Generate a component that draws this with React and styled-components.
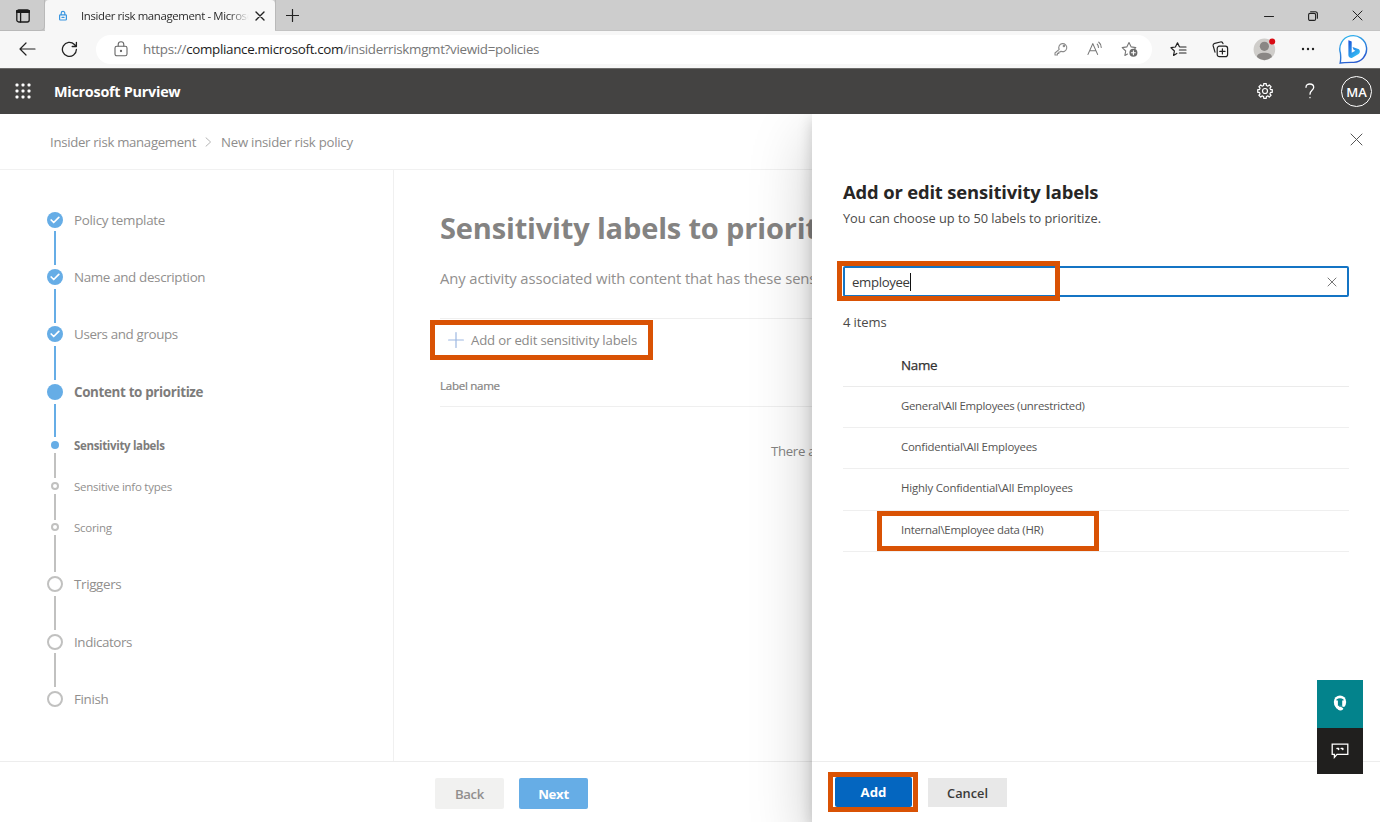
import React from "react";
import styled, { createGlobalStyle, css } from "styled-components";

const Global = createGlobalStyle`
  * { box-sizing: border-box; }
  html, body { margin: 0; padding: 0; overflow: hidden; background: #fff; }
  body { font-family: "Open Sans", "Noto Sans", sans-serif; font-size: 13px; color: #323130; }
  svg { display: block; flex: none; }
  h1, h2, p { margin: 0; }
  button { font: inherit; border: 0; padding: 0; background: none; }
`;

const Window = styled.div`
  width: 1380px; height: 822px; display: flex; flex-direction: column; overflow: hidden;
`;

/* ---- browser chrome ---- */
const TabStrip = styled.div`
  height: 31px; flex: none; display: flex; background: #cdcdcd; border-bottom: 1px solid #c3c3c3;
`;
const TabActions = styled.div`
  width: 45px; height: 31px; padding: 9px 0 0 16px; border-right: 1px solid #b9b9b9;
  border-bottom: 1px solid #b9b9b9; border-bottom-right-radius: 5px;
`;
const Tab = styled.div`
  width: 230px; height: 31px; flex: none; display: flex; align-items: center; justify-content: space-between;
  background: #f7f7f7; border-radius: 4px 4px 0 0; padding: 0 10px 0 13px;
`;
const TabLabel = styled.div`
  display: flex; align-items: center; gap: 13px;
`;
const TabTitle = styled.span`
  width: 168px; overflow: hidden; white-space: nowrap; font-size: 11.4px;
  letter-spacing: ${(p) => p.$ls}px; color: #2b2b2b; flex: none;
  mask-image: linear-gradient(90deg, #000 148px, transparent 168px);
`;
const NewTab = styled.div`
  flex: 1; padding: 9px 0 0 10px; border-left: 1px solid #b9b9b9;
`;
const WindowControls = styled.div`
  display: flex; align-items: center; gap: 34px; padding: 1px 17px 0 0;
`;
const Toolbar = styled.div`
  height: 37px; flex: none; display: flex; align-items: center; background: #f7f7f7; padding: 0 0 1px 19px;
`;
const Reload = styled.span`
  margin: 0 18px 0 25px;
`;
const AddressBar = styled.div`
  width: 1056px; height: 29px; flex: none; display: flex; align-items: center;
  background: #fff; border-radius: 15px; padding: 0 13px 0 18px;
`;
const Url = styled.span`
  margin-left: 15px; flex: 1; font-size: 13.4px; letter-spacing: ${(p) => p.$ls}px; color: #767676; white-space: nowrap;
  b { font-weight: 400; color: #1c1c1c; }
`;
const AddressIcons = styled.div`
  display: flex; align-items: center; gap: 18px;
`;
const BrowserIcons = styled.div`
  flex: 1; display: flex; align-items: center; justify-content: space-between; padding: 0 12px 0 18px;
`;

/* ---- suite header ---- */
const SuiteHeader = styled.header`
  height: 46px; flex: none; display: flex; align-items: center; background: #444342; color: #fff;
  padding: 0 8px 1px 15px; border-top: 1px solid #6c6b6a;
`;
const Product = styled.span`
  margin-left: 23px; flex: 1; font-size: 14.4px; font-weight: 700; letter-spacing: ${(p) => p.$ls}px;
`;
const HelpMark = styled.span`
  margin: 0 26px 0 32px;
`;
const Persona = styled.span`
  width: 31px; height: 31px; border: 1px solid #fff; border-radius: 50%; font-size: 13px; font-weight: 600;
  display: flex; align-items: center; justify-content: center; padding-top: 1px;
`;

/* ---- dimmed wizard page ---- */
const Stage = styled.main`
  position: relative; flex: 1; min-height: 0; display: flex; flex-direction: column; overflow: hidden;
`;
const Breadcrumb = styled.nav`
  height: 56px; flex: none; display: flex; align-items: center; gap: 9px; padding-left: 50px; color: #8e8d8c;
  border-bottom: 1px solid #f1f1f1; font-size: 13.2px; white-space: nowrap;
`;
const Crumb = styled.span`
  letter-spacing: ${(p) => p.$ls}px;
`;
const Body = styled.div`
  flex: 1; min-height: 0; display: flex;
`;
const Sidebar = styled.aside`
  width: 394px; flex: none; padding: 41.7px 0 0 47px; border-right: 1px solid #f0f0f0;
`;
const Step = styled.div`
  display: flex; height: ${(p) => p.$h}px; gap: 11px;
`;
const Track = styled.div`
  width: 16px; display: flex; flex-direction: column; align-items: center;
`;
const Dot = styled.span`
  width: ${(p) => p.$size}px; height: ${(p) => p.$size}px; border-radius: 50%; flex: none;
  display: flex; align-items: center; justify-content: center;
  ${(p) => p.$filled
    ? css`background: #66ade6;`
    : css`border: 2px solid #c1c1c0; background: #fff;`}
`;
const Line = styled.span`
  width: 2px; flex: 1; margin: 3.7px 0; background: ${(p) => (p.$done ? "#66ade6" : "#c1c1c0")};
`;
const StepLabel = styled.span`
  height: ${(p) => p.$size}px; line-height: ${(p) => (p.$size < 12 ? 9 : 16)}px; white-space: nowrap;
  font-size: ${(p) => (p.$size < 12 ? 11.5 : 13.4)}px; letter-spacing: ${(p) => p.$ls || 0}px;
  font-weight: ${(p) => (p.$active ? 700 : 400)}; color: ${(p) => (p.$active ? "#7d7c7b" : "#918f8e")};
`;
const Content = styled.section`
  flex: 1; padding: 38px 0 0 46px; white-space: nowrap; overflow: hidden;
`;
const Title = styled.h1`
  font-size: 29px; line-height: 40px; font-weight: 700; letter-spacing: ${(p) => p.$ls}px; color: #848382;
`;
const Lead = styled.p`
  margin-top: 20px; font-size: 14.8px; line-height: 20px; letter-spacing: ${(p) => p.$ls}px; color: #918f8e;
`;
const Commands = styled.div`
  margin-top: 30px; height: 43px; border-top: 1px solid #efefef; padding: 1px 0 0;
`;
const CommandButton = styled.button`
  position: relative; left: -10px; width: 223px; height: 40px; display: flex; align-items: center; gap: 7px;
  padding-left: 13px; border: 5px solid #d95204; color: #8b8a89; font-size: 13.2px; letter-spacing: ${(p) => p.$ls}px;
`;
const ColumnHead = styled.div`
  height: 46px; line-height: 50px; border-bottom: 1px solid #efefef; font-size: 11.6px; color: #858483;
  letter-spacing: ${(p) => p.$ls}px; -webkit-text-stroke: 0.2px #858483;
`;
const EmptyNote = styled.p`
  padding: 34px 0 0 331px; font-size: 13.2px; line-height: 20px; letter-spacing: -0.3px; color: #858483;
`;
const WizardFooter = styled.footer`
  height: 61px; flex: none; display: flex; align-items: flex-start; gap: 15px; padding: 16px 0 0 435px;
  border-top: 1px solid #ededed;
`;
const WizardButton = styled.button`
  width: 69px; height: 31px; border-radius: 2px; font-size: 13.2px; font-weight: ${(p) => (p.$primary ? 700 : 600)};
  letter-spacing: -0.3px;
  background: ${(p) => (p.$primary ? "#66ade6" : "#f1f1f0")}; color: ${(p) => (p.$primary ? "#fff" : "#918f8e")};
`;

/* ---- flyout panel ---- */
const Panel = styled.section`
  position: absolute; top: 0; right: 0; bottom: 0; width: 568px; display: flex; flex-direction: column;
  background: #fff; box-shadow: 0 25px 58px rgba(0, 0, 0, 0.22), 0 5px 14px rgba(0, 0, 0, 0.18);
`;
const PanelTop = styled.div`
  height: 59px; flex: none; display: flex; justify-content: flex-end; padding: 19px 17px 0 0;
`;
const PanelBody = styled.div`
  flex: 1; padding: 4px 31px 0; white-space: nowrap;
`;
const PanelTitle = styled.h2`
  font-size: 18.4px; line-height: 30px; font-weight: 700; letter-spacing: ${(p) => p.$ls}px; color: #272625;
`;
const Hint = styled.p`
  margin-top: 2px; font-size: 12.8px; line-height: 18px; letter-spacing: ${(p) => p.$ls}px; color: #4b4a49;
`;
const SearchBox = styled.div`
  position: relative; margin-top: 39px; height: 31px; width: 506px; display: flex; align-items: center;
  justify-content: space-between; border: 2px solid #1474c4; border-radius: 2px; padding: 0 10px 0 7px;
`;
const Query = styled.span`
  font-size: 13.2px; line-height: 18px; letter-spacing: ${(p) => p.$ls}px; border-right: 1px solid #111; color: #3b3a39;
`;
const Highlight = styled.span`
  position: absolute; left: ${(p) => p.$x}px; top: ${(p) => p.$y}px; width: ${(p) => p.$w}px; height: ${(p) => p.$h}px;
  border: 5px solid #d95204;
`;
const Count = styled.p`
  margin-top: 16px; font-size: 13px; line-height: 18px; letter-spacing: ${(p) => p.$ls}px; color: #4b4a49;
`;
const ListHead = styled.div`
  margin-top: 14px; height: 42px; line-height: 41px; padding-left: 58px; border-bottom: 1px solid #ebebeb;
  font-size: 13.4px; letter-spacing: -0.3px; color: #323130; -webkit-text-stroke: 0.25px #323130; width: 506px;
`;
const ListRow = styled.div`
  position: relative; width: 506px; height: 41.2px; line-height: 38px; padding-left: 58px; border-bottom: 1px solid #efefef;
  font-size: 11.4px; letter-spacing: ${(p) => p.$ls}px; color: #555453;
`;
const PanelFooter = styled.footer`
  height: 61px; flex: none; display: flex; gap: 10px; padding: 10px 0 0 16px; border-top: 1px solid #ededed;
`;
const AddFrame = styled.div`
  width: 90px; height: 40px; border: 5px solid #d95204; padding: 0 1px 0 2px; background: #fff;
`;
const AddButton = styled.button`
  width: 100%; height: 30px; border-radius: 2px; background: #0466c0; color: #fff; font-size: 13.2px; font-weight: 700;
`;
const CancelButton = styled.button`
  width: 79px; height: 29px; margin-top: 6px; background: #e8e8e8; color: #3b3a39; font-size: 12.8px; font-weight: 600;
`;
const Dock = styled.div`
  position: absolute; right: 17px; top: 566px; width: 46px;
`;
const DockButton = styled.div`
  height: ${(p) => p.$h}px; background: ${(p) => p.$bg}; display: flex; align-items: center; justify-content: center;
  padding-bottom: ${(p) => p.$lift || 0}px;
`;

const Icon = ({ w = 16, h = w, box = `0 0 ${w} ${h}`, color = "#333", sw = 1.1, children }) => (
  <svg width={w} height={h} viewBox={box} fill="none" stroke={color} strokeWidth={sw} strokeLinecap="round" strokeLinejoin="round">
    {children}
  </svg>
);

const Cross = ({ size, color, sw = 1 }) => (
  <Icon w={size} color={color} sw={sw}>
    <path d={`M1 1L${size - 1} ${size - 1}M${size - 1} 1L1 ${size - 1}`} />
  </Icon>
);

/* Outline of an eight-toothed gear centred at (8, 8). */
const gearPath = (() => {
  const at = (deg, r) => {
    const a = (deg * Math.PI) / 180;
    return `${(8 + r * Math.cos(a)).toFixed(2)} ${(8 + r * Math.sin(a)).toFixed(2)}`;
  };
  const points = [];
  for (let i = 0; i < 8; i++) {
    const c = i * 45;
    points.push(at(c - 14, 5.7), at(c - 10, 7.4), at(c + 10, 7.4), at(c + 14, 5.7));
  }
  return `M${points.join("L")}z`;
})();

const steps = [
  { label: "Policy template", h: 57.4, kind: "done", ls: -0.3 },
  { label: "Name and description", h: 57.4, kind: "done", ls: -0.35 },
  { label: "Users and groups", h: 57.4, kind: "done", ls: -0.38 },
  { label: "Content to prioritize", h: 57.2, kind: "current", ls: -0.35 },
  { label: "Sensitivity labels", h: 41.1, kind: "current", small: true, greyLine: true, ls: -0.34 },
  { label: "Sensitive info types", h: 41.1, small: true, ls: -0.25 },
  { label: "Scoring", h: 52.9, small: true, ls: -0.28 },
  { label: "Triggers", h: 57.4, ls: -0.35 },
  { label: "Indicators", h: 57.4, ls: -0.4 },
  { label: "Finish", h: 16, last: true, ls: -0.35 },
];

const rows = [
  { name: "General\\All Employees (unrestricted)", ls: -0.29 },
  { name: "Confidential\\All Employees", ls: -0.22 },
  { name: "Highly Confidential\\All Employees", ls: -0.18 },
  { name: "Internal\\Employee data (HR)", ls: -0.26, marked: true },
];

function BrowserChrome() {
  return (
    <>
      <TabStrip>
        <TabActions>
          <Icon w={14} h={14} color="#1b1b1b" sw={1.3}>
            <rect x="0.8" y="1" width="12.4" height="12" rx="2" />
            <path d="M1 2.6h12" strokeWidth="3" />
            <path d="M4.6 4v9" />
          </Icon>
        </TabActions>
        <Tab>
          <TabLabel>
            <Icon w={10} h={12} color="#3a96e0" sw={1.2}>
              <rect x="1.6" y="4.8" width="6.8" height="5.2" rx="0.8" />
              <path d="M3.2 4.6V3.2a1.8 1.8 0 0 1 3.6 0v1.4M4 7.4h2" />
            </Icon>
            <TabTitle $ls={-0.36}>Insider risk management - Microsoft</TabTitle>
          </TabLabel>
          <Cross size={10} color="#222" sw={1.4} />
        </Tab>
        <NewTab>
          <Icon w={13} h={13} color="#222" sw={1.2}><path d="M6.5 0.5v12M0.5 6.5h12" /></Icon>
        </NewTab>
        <WindowControls>
          <Icon w={10} h={10} color="#222"><path d="M0.5 5.5h9" /></Icon>
          <Icon w={10} h={10} color="#222">
            <rect x="0.6" y="2.4" width="7" height="7" rx="1.4" />
            <path d="M2.6 0.7h4.6a2.2 2.2 0 0 1 2.2 2.2v4.4" />
          </Icon>
          <Cross size={11} color="#222" />
        </WindowControls>
      </TabStrip>
      <Toolbar>
        <Icon w={17} h={14} color="#222" sw={1.2}><path d="M16 7H1M7 1L1 7l6 6" /></Icon>
        <Reload>
          <Icon w={17} h={17} color="#222" sw={1.3}>
            <path d="M15.4 8.5a7 7 0 1 1-2-5l1.9 1.9M15.4 1.3v4.2h-4.2" />
          </Icon>
        </Reload>
        <AddressBar>
          <Icon w={14} h={16} color="#666" sw={1.1}>
            <rect x="1" y="5.2" width="12" height="9.6" rx="1.8" />
            <path d="M4.2 5V3.6a2.8 2.8 0 0 1 5.6 0V5" />
            <circle cx="7" cy="10" r="0.6" fill="#666" />
          </Icon>
          <Url $ls={-0.32}>https://<b>compliance.microsoft.com</b>/insiderriskmgmt?viewid=policies</Url>
          <AddressIcons>
            <Icon w={14} h={14} color="#8a8a8a">
              <path d="M5.2 7.4A4 4 0 1 1 7 9.2L6 10H4.8v1.4H3.4V13H1v-2z" />
              <circle cx="9.9" cy="4" r="0.7" />
            </Icon>
            <Icon w={17} h={16} color="#777">
              <path d="M2 13.4L6.8 2.6L11.6 13.4M3.6 9.8h6.4M11.2 3.2a4 4 0 0 1 1.2 3.2M12.8 1.2a6.2 6.2 0 0 1 2.4 5.2" />
            </Icon>
            <Icon w={18} h={17} color="#777">
              <path d="M6.5 13L3.9 14.4L4.7 10L1.2 6.6L5.8 5.9L8 1.6L10.2 5.9L14.8 6.6L13.6 7.8" />
              <circle cx="12.4" cy="11.8" r="4" fill="#6b6b6b" stroke="none" />
              <path d="M12.4 9.8v4M10.4 11.8h4" stroke="#fff" />
            </Icon>
          </AddressIcons>
        </AddressBar>
        <BrowserIcons>
          <Icon w={17} h={16} color="#222" sw={1.2}>
            <path d="M6.8 12.4L3.6 14.4L4.4 10L1 6.7L5.4 6L7.5 1.8L9.3 5.6M10 6h6M9.4 9h6.6M9.4 12h6.6" />
          </Icon>
          <Icon w={17} h={17} color="#222" sw={1.2}>
            <rect x="5.2" y="5.2" width="10.4" height="10.4" rx="2.2" />
            <path d="M10.4 7.8v5.2M7.8 10.4H13M3 11.2L1.2 5a2.2 2.2 0 0 1 1.6-2.7L8.4 1a2.2 2.2 0 0 1 2.6 1.6" />
          </Icon>
          <Icon w={23} h={24} sw={0}>
            <circle cx="11.4" cy="12.4" r="10.8" fill="#cfcdca" />
            <circle cx="11.4" cy="9.3" r="4.6" fill="#8a8785" />
            <path d="M4 20C4 16.8 7.4 15.8 11.4 15.8s7.4 1 7.4 4.2A10.8 10.8 0 0 1 11.4 23.2A10.8 10.8 0 0 1 4 20z" fill="#8a8785" />
            <circle cx="19.2" cy="4.6" r="3" fill="#d90c14" />
          </Icon>
          <Icon w={14} h={4} sw={0}>
            <circle cx="2" cy="2" r="1.2" fill="#222" /><circle cx="7" cy="2" r="1.2" fill="#222" /><circle cx="12" cy="2" r="1.2" fill="#222" />
          </Icon>
          <svg width="29" height="30" viewBox="0 0 29 30">
            <defs>
              <linearGradient id="bubble" x1="0" y1="0" x2="0.4" y2="1">
                <stop offset="0" stopColor="#2ebcf0" /><stop offset="1" stopColor="#2a5cd0" />
              </linearGradient>
              <linearGradient id="bing" x1="0" y1="0" x2="0.6" y2="1">
                <stop offset="0" stopColor="#1a50d8" /><stop offset="1" stopColor="#35c0f4" />
              </linearGradient>
            </defs>
            <path d="M1.2 29C2 25 1.8 22 1.4 19A13.4 13.4 0 1 1 14.7 28.4C9 28.4 5 28.3 1.2 29z" fill="#fff" stroke="url(#bubble)" strokeWidth="1.4" />
            <path d="M9.4 6.2L12.7 7.4V18.8L16.4 16.7L14.6 15.8L13.5 12.9L20 15.3A3.2 3.2 0 0 1 19.6 20.1L13.3 23.7A2.7 2.7 0 0 1 9.4 21.3z" fill="url(#bing)" />
          </svg>
        </BrowserIcons>
      </Toolbar>
    </>
  );
}

function Header() {
  return (
    <SuiteHeader>
      <svg width="16" height="16" viewBox="0 0 16 16" fill="#fff">
        {[2, 8, 14].flatMap((y) => [2, 8, 14].map((x) => <rect key={`${x}-${y}`} x={x - 1.5} y={y - 1.5} width="3" height="3" rx="1" />))}
      </svg>
      <Product $ls={-0.26}>Microsoft Purview</Product>
      <Icon w={16} color="#fff" sw={1.2}>
        <path d={gearPath} />
        <circle cx="8" cy="8" r="2.5" />
      </Icon>
      <HelpMark>
        <Icon w={10} h={16} color="#fff" sw={1.3}>
          <path d="M1 4.3C1 2.2 2.7 1 4.8 1s3.9 1.2 3.9 3.3C8.7 7.4 5 7.3 5 11.2M5 14.4v.3" />
        </Icon>
      </HelpMark>
      <Persona>MA</Persona>
    </SuiteHeader>
  );
}

function Wizard() {
  return (
    <>
      <Breadcrumb>
        <Crumb $ls={-0.3}>Insider risk management</Crumb>
        <Icon w={7} h={10} color="#b5b5b5" sw={1}><path d="M1 0.8L5.6 5L1 9.2" /></Icon>
        <Crumb $ls={-0.24}>New insider risk policy</Crumb>
      </Breadcrumb>
      <Body>
        <Sidebar>
          {steps.map((s) => {
            const size = s.small ? 8 : 16;
            return (
              <Step key={s.label} $h={s.h}>
                <Track>
                  <Dot $size={size} $filled={!!s.kind}>
                    {s.kind === "done" && (
                      <Icon w={10} h={8} color="#fff" sw={1.7}><path d="M1.2 4L3.7 6.5L8.8 1.4" /></Icon>
                    )}
                  </Dot>
                  {!s.last && <Line $done={!!s.kind && !s.greyLine} />}
                </Track>
                <StepLabel $size={size} $active={s.kind === "current"} $ls={s.ls}>{s.label}</StepLabel>
              </Step>
            );
          })}
        </Sidebar>
        <Content>
          <Title $ls={-0.16}>Sensitivity labels to prioritize</Title>
          <Lead $ls={-0.1}>Any activity associated with content that has these sensitivity</Lead>
          <Commands>
            <CommandButton $ls={-0.18}>
              <Icon w={16} color="#9db8e2" sw={1.2}><path d="M8 0.6v14.8M0.6 8h14.8" /></Icon>
              Add or edit sensitivity labels
            </CommandButton>
          </Commands>
          <ColumnHead $ls={-0.3}>Label name</ColumnHead>
          <EmptyNote>There are</EmptyNote>
        </Content>
      </Body>
      <WizardFooter>
        <WizardButton>Back</WizardButton>
        <WizardButton $primary>Next</WizardButton>
      </WizardFooter>
    </>
  );
}

function LabelsPanel() {
  return (
    <Panel>
      <PanelTop><Cross size={13} color="#555" /></PanelTop>
      <PanelBody>
        <PanelTitle $ls={-0.15}>Add or edit sensitivity labels</PanelTitle>
        <Hint $ls={-0.03}>You can choose up to 50 labels to prioritize.</Hint>
        <SearchBox>
          <Query $ls={-0.34}>employee</Query>
          <Cross size={10} color="#777" />
          <Highlight $x={-8} $y={-7} $w={223} $h={40} />
        </SearchBox>
        <Count $ls={-0.1}>4 items</Count>
        <ListHead>Name</ListHead>
        {rows.map((r) => (
          <ListRow key={r.name} $ls={r.ls}>
            {r.name}
            {r.marked && <Highlight $x={34} $y={0} $w={222} $h={40} />}
          </ListRow>
        ))}
      </PanelBody>
      <PanelFooter>
        <AddFrame><AddButton>Add</AddButton></AddFrame>
        <CancelButton>Cancel</CancelButton>
      </PanelFooter>
      <Dock>
        <DockButton $h={48} $bg="#03838c" $lift={2}>
          <svg width="14" height="16" viewBox="0 0 14 16">
            <ellipse cx="7" cy="7" rx="6.2" ry="6.6" fill="#fff" />
            <ellipse cx="7.4" cy="13.6" rx="2.9" ry="1.8" fill="#fff" />
            <path d="M1.4 9.4L3.2 13.2L6 14.6V11z" fill="#fff" />
            <path d="M3.4 4.6Q7 1.8 10.6 4.6V5.6H9.2V10.8H4.9V5.6H3.4z" fill="#03838c" />
            <path d="M5.6 10.4H9.2V11.8H6.4z" fill="#03838c" />
            <path d="M8.4 11.2L12 12.2L10.6 13.4L8.6 12.2z" fill="#03838c" />
          </svg>
        </DockButton>
        <DockButton $h={46} $bg="#201f1e">
          <Icon w={18} h={16} color="#fff" sw={1.3}>
            <path d="M1.2 1.2h15.6v10.2H6L3.4 14.4V11.4H1.2z" strokeLinejoin="miter" />
            <path d="M6 5.4h1.6v1.2M10.2 5.4h1.6v1.2" strokeWidth="1.5" />
          </Icon>
        </DockButton>
      </Dock>
    </Panel>
  );
}

export default function App() {
  return (
    <Window>
      <Global />
      <BrowserChrome />
      <Header />
      <Stage>
        <Wizard />
        <LabelsPanel />
      </Stage>
    </Window>
  );
}
